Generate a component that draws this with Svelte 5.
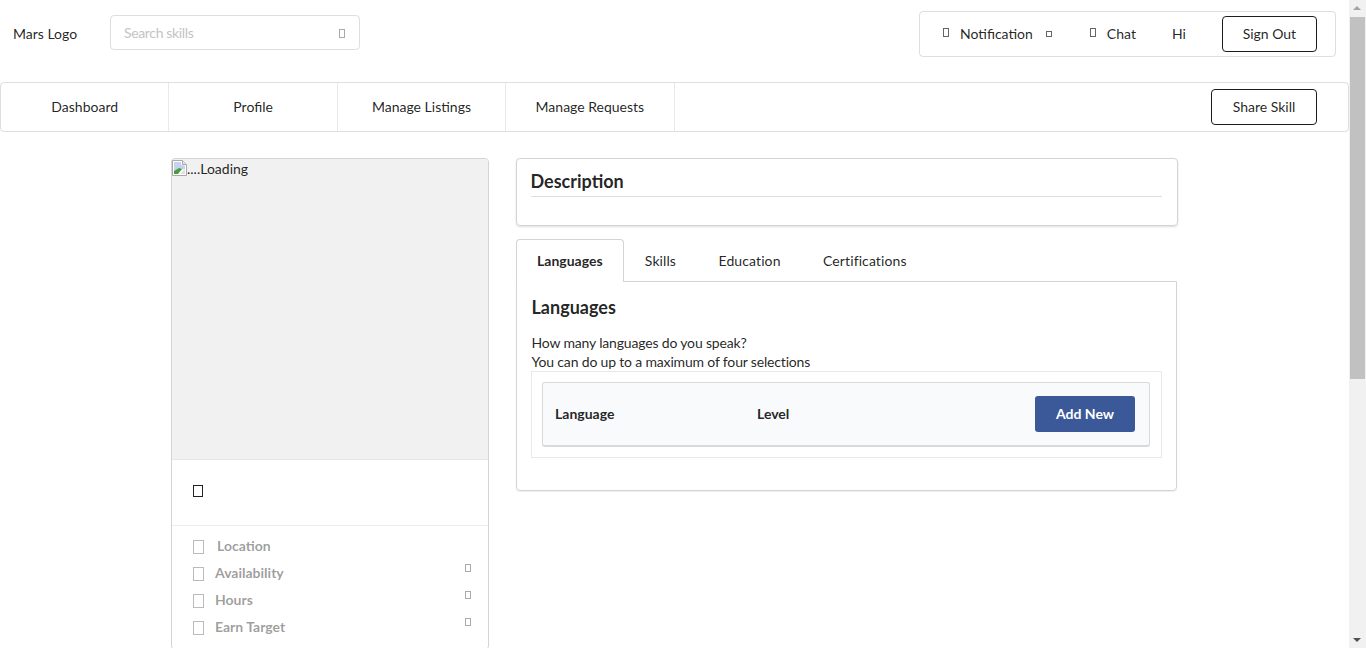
<script>
  const navItems = ['Dashboard', 'Profile', 'Manage Listings', 'Manage Requests'];
  const tabs = ['Languages', 'Skills', 'Education', 'Certifications'];
  const details = [
    { label: 'Location', arrow: false },
    { label: 'Availability', arrow: true },
    { label: 'Hours', arrow: true },
    { label: 'Earn Target', arrow: true }
  ];
</script>

<div class="page">
  <header class="top">
    <span class="logo">Mars Logo</span>
    <div class="search">
      <span class="placeholder">Search skills</span>
      <span class="tofu search-icon"></span>
    </div>
    <div class="user-menu">
      <span class="tofu bell"></span>
      <span class="notif">Notification</span>
      <span class="tofu caret"></span>
      <span class="tofu chat-icon"></span>
      <span class="chat">Chat</span>
      <span class="hi">Hi</span>
      <button class="outline sign-out">Sign Out</button>
    </div>
  </header>

  <nav class="nav">
    {#each navItems as item}
      <a class="nav-item">{item}</a>
    {/each}
    <button class="outline share">Share Skill</button>
  </nav>

  <main class="main">
    <aside class="profile">
      <div class="photo">
        <svg class="broken" width="16" height="16" viewBox="0 0 16 16">
          <path d="M.5 .5h10l4 4v11H.5z" fill="#fff" stroke="#a9a9a9" />
          <path d="M10.5 .5v4h4" fill="#e4e4e4" stroke="#a9a9a9" />
          <path d="M2 2h7v3l4 .5V9L2 11z" fill="#c3d3ee" />
          <path d="M2 14v-3l5-3 3 1-4 5z" fill="#4f9a3d" />
          <path d="M8 14l5-5v5z" fill="#dfe3dc" />
        </svg><span>....Loading</span>
      </div>
      <div class="name-block"><span class="tofu name-icon"></span></div>
      <ul class="details">
        {#each details as row, i}
          <li>
            <span class="tofu row-icon"></span>
            <span class="row-label" class:first={i === 0}>{row.label}</span>
            {#if row.arrow}<span class="tofu row-arrow"></span>{/if}
          </li>
        {/each}
      </ul>
    </aside>

    <section class="content">
      <div class="description">
        <h3>Description</h3>
        <div class="rule"></div>
      </div>

      <div class="tabs">
        {#each tabs as tab, i}
          <a class="tab" class:active={i === 0}>{tab}</a>
        {/each}
      </div>
      <div class="panel">
        <h3>Languages</h3>
        <p>How many languages do you speak?<br />You can do up to a maximum of four selections</p>
        <div class="table-wrap">
          <div class="table-head">
            <span class="col-lang">Language</span>
            <span class="col-level">Level</span>
            <button class="add">Add New</button>
          </div>
        </div>
      </div>
    </section>
  </main>

  <div class="scrollbar">
    <span class="arrow up"></span>
    <div class="thumb"></div>
    <span class="arrow down"></span>
  </div>
</div>

<style>
  :global(body) {
    margin: 0;
    overflow: hidden;
    background: #fff;
  }

  .page {
    position: relative;
    width: 1366px;
    height: 648px;
    overflow: hidden;
    font-family: Lato, 'Helvetica Neue', Arial, sans-serif;
    font-size: 14px;
    color: rgba(0, 0, 0, 0.87);
  }

  .tofu {
    display: inline-block;
    box-sizing: border-box;
    border: 1px solid #666;
    flex: none;
  }

  .top {
    height: 82px;
    width: 1349px;
    display: flex;
    align-items: flex-start;
    box-sizing: border-box;
  }

  .logo {
    margin: 24px 0 0 13px;
    width: 97px;
    line-height: 20px;
  }

  .search {
    margin-top: 15px;
    width: 250px;
    height: 35px;
    box-sizing: border-box;
    border: 1px solid rgba(34, 36, 38, 0.15);
    border-radius: 4px;
    display: flex;
    align-items: center;
    justify-content: space-between;
    padding: 0 14px 0 13px;
  }

  .placeholder {
    color: #c4c4c4;
    letter-spacing: -0.35px;
  }

  .search-icon {
    width: 6px;
    height: 9px;
    margin-top: 1px;
    border-color: #aaa;
  }

  .user-menu {
    margin: 11px 13px 0 auto;
    width: 417px;
    height: 46px;
    box-sizing: border-box;
    border: 1px solid rgba(34, 36, 38, 0.15);
    border-radius: 4px;
    display: flex;
    align-items: center;
    padding-left: 23px;
  }

  .bell {
    width: 6px;
    height: 9px;
    margin-top: -3px;
  }

  .notif {
    margin: -1px 0 0 11px;
  }

  .caret {
    width: 6px;
    height: 6px;
    margin-left: 13px;
  }

  .chat-icon {
    width: 6px;
    height: 9px;
    margin: -3px 0 0 38px;
  }

  .chat {
    margin: -1px 0 0 11px;
  }

  .hi {
    margin: -1px 0 0 36px;
  }

  .outline {
    box-sizing: border-box;
    height: 36px;
    background: #fff;
    border: 1px solid #1b1c1d;
    border-radius: 4px;
    font-family: inherit;
    font-size: 14px;
    color: rgba(0, 0, 0, 0.87);
    padding: 0 0 2px;
  }

  .sign-out {
    width: 95px;
    margin-left: 36px;
  }

  .nav {
    width: 1349px;
    height: 50px;
    box-sizing: border-box;
    border: 1px solid rgba(34, 36, 38, 0.15);
    border-radius: 4px;
    display: flex;
    align-items: stretch;
  }

  .nav-item {
    width: 168.4px;
    box-sizing: border-box;
    border-right: 1px solid rgba(34, 36, 38, 0.1);
    display: flex;
    align-items: center;
    justify-content: center;
    padding-bottom: 2px;
  }

  .share {
    width: 106px;
    margin: 6px 31px 6px auto;
  }

  .main {
    display: flex;
    align-items: flex-start;
    padding: 26px 0 0 171px;
  }

  .profile {
    width: 318px;
    flex: none;
    box-sizing: border-box;
    border: 1px solid #d4d4d5;
    border-radius: 4px;
  }

  .photo {
    height: 300px;
    background: #f1f1f1;
    border-bottom: 1px solid #e6e6e6;
    border-radius: 3px 3px 0 0;
    line-height: 20px;
    display: flex;
    align-items: flex-start;
  }

  .broken {
    margin: 1px -1px 0 0;
    flex: none;
    width: 16px;
    height: 16px;
  }

  .name-block {
    height: 65px;
    border-bottom: 1px solid #ececec;
    display: flex;
    align-items: flex-start;
    padding-left: 21px;
  }

  .name-icon {
    width: 10px;
    height: 12px;
    margin-top: 25px;
    border-color: #222;
  }

  .details {
    list-style: none;
    margin: 0;
    padding: 6px 0 9px;
    color: rgba(0, 0, 0, 0.4);
    font-weight: 700;
  }

  .details li {
    height: 27px;
    display: flex;
    align-items: center;
    position: relative;
    padding-left: 21px;
  }

  .row-icon {
    width: 11px;
    height: 14px;
    border-color: #bbb;
    margin-top: 3px;
  }

  .row-label {
    margin-left: 11px;
  }

  .row-label.first {
    margin-left: 13px;
  }

  .row-arrow {
    position: absolute;
    right: 17px;
    top: 5px;
    width: 6px;
    height: 8px;
    border-color: #aaa;
  }

  .content {
    width: 661px;
    margin-left: 27px;
    flex: none;
  }

  .description {
    width: 662px;
    height: 68px;
    box-sizing: border-box;
    border: 1px solid #d4d4d5;
    border-radius: 4px;
    box-shadow: 0 1px 2px rgba(34, 36, 38, 0.15);
    padding: 10px 15px 0 13.5px;
  }

  h3 {
    margin: 0;
    font-size: 18px;
    font-weight: 700;
    line-height: 25px;
  }

  .rule {
    height: 1px;
    background: rgba(34, 36, 38, 0.15);
    margin-top: 2px;
  }

  .tabs {
    display: flex;
    margin-top: 13px;
    height: 43px;
    position: relative;
    z-index: 1;
  }

  .tab {
    display: flex;
    align-items: center;
    padding: 0 20.25px 2px;
    box-sizing: border-box;
    border: 1px solid transparent;
    border-bottom: 0;
    letter-spacing: 0.1px;
  }

  .tab.active {
    padding: 0 20px 2px;
    letter-spacing: 0;
    font-weight: 700;
    background: #fff;
    border-color: #d4d4d5;
    border-radius: 4px 4px 0 0;
  }

  .panel {
    box-sizing: border-box;
    margin-top: -1px;
    height: 210px;
    border: 1px solid #d4d4d5;
    border-radius: 0 0 4px 4px;
    box-shadow: 0 1px 1px rgba(34, 36, 38, 0.08);
    padding: 13px 14px 0;
  }

  .panel h3 {
    padding-left: 0.5px;
  }

  .panel p {
    margin: 13px 0 0;
    padding-left: 0.5px;
    line-height: 19px;
    letter-spacing: -0.17px;
  }

  .table-wrap {
    height: 87px;
    box-sizing: border-box;
    border: 1px solid rgba(34, 36, 38, 0.1);
    padding: 10px 11px 0 10px;
  }

  .table-head {
    height: 65px;
    box-sizing: border-box;
    background: #f9fafb;
    border: 1px solid rgba(34, 36, 38, 0.15);
    border-bottom-width: 2px;
    border-radius: 3px;
    display: flex;
    align-items: center;
    padding: 0 14px 0 12px;
    font-weight: 700;
  }

  .col-lang,
  .col-level {
    margin-top: -2px;
  }

  .col-lang {
    width: 202px;
  }

  .add {
    margin-left: auto;
    width: 100px;
    height: 36px;
    border: 0;
    border-radius: 3px;
    background: #3b5998;
    color: #fff;
    font-family: inherit;
    font-size: 14px;
    font-weight: 700;
    padding: 0 0 2px;
  }

  /* drawn scrollbar, the window has none of its own here */
  .scrollbar {
    position: absolute;
    top: 0;
    right: 0;
    width: 17px;
    height: 648px;
    background: #f1f1f1;
  }

  .thumb {
    position: absolute;
    top: 17px;
    left: 1px;
    width: 15px;
    height: 362px;
    background: #c1c1c1;
  }

  .arrow {
    position: absolute;
    left: 4px;
    width: 0;
    height: 0;
    border-left: 4px solid transparent;
    border-right: 4px solid transparent;
  }

  .arrow.up {
    top: 6px;
    border-bottom: 4px solid #a3a3a3;
  }

  .arrow.down {
    bottom: 6px;
    border-top: 4px solid #505050;
  }
</style>
